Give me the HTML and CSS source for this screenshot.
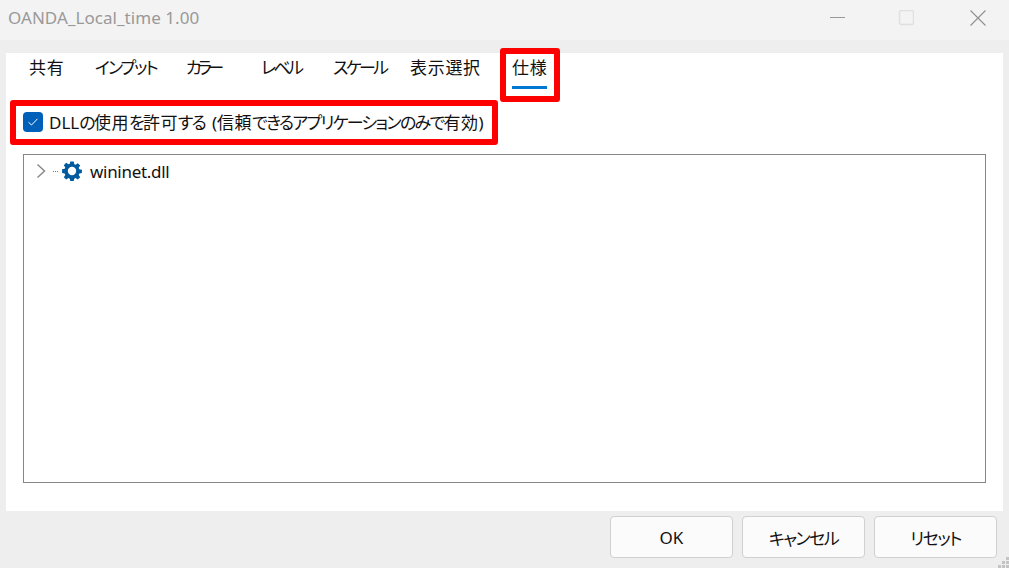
FILE: index.html
```html
<!DOCTYPE html>
<html lang="ja">
<head>
<meta charset="utf-8">
<title>OANDA_Local_time 1.00</title>
<link rel="stylesheet" href="styles.css">
</head>
<body>
<div class="window">
  <header class="titlebar">
    <span class="title">OANDA_Local_time 1.00</span>
    <div class="controls">
      <svg class="ctl" width="16" height="16" viewBox="0 0 16 16"><path d="M0 7.5H15" stroke="#999" fill="none"/></svg>
      <svg class="ctl ctl-max" width="16" height="16" viewBox="0 0 16 16"><rect x="1.5" y="0.5" width="14" height="14" rx="2" stroke="#e0e0e0" stroke-width="1.5" fill="none"/></svg>
      <svg class="ctl" width="16" height="16" viewBox="0 0 16 16"><path d="M0.5 0.5L15.5 15.5M15.5 0.5L0.5 15.5" stroke="#8f8f8f" stroke-width="1.1" fill="none"/></svg>
    </div>
  </header>
  <main class="panel">
    <nav class="tabs">
      <span class="tab t1 kanji">共有</span>
      <span class="tab t2 kana">インプット</span>
      <span class="tab t3 kana-long">カラー</span>
      <span class="tab t4 kana-tight">レベル</span>
      <span class="tab t5 kana-tight">スケール</span>
      <span class="tab t6 kanji">表示選択</span>
      <span class="tab t7 kanji active">仕様</span>
    </nav>
    <label class="check">
      <span class="box"><svg width="12" height="10" viewBox="0 0 12 10"><path d="M1.5 5.2L4.5 8L10.5 1.8" stroke="#fff" stroke-width="1" fill="none"/></svg></span>
      <span class="label"><span class="latin">DLL</span>の<span class="kj">使用</span>を<span class="kj">許可</span>する <span class="latin paren">(</span><span class="kj">信頼</span>できるアプリケーションのみで<span class="kj">有効</span><span class="latin">)</span></span>
    </label>
    <section class="tree">
      <div class="node">
        <svg class="chev" width="10" height="16" viewBox="0 0 10 16"><path d="M1.5 1.5L8.5 8L1.5 14.5" stroke="#8a8a8a" stroke-width="1.5" fill="none"/></svg>
        <span class="dots"></span>
        <svg class="gear" width="20" height="20" viewBox="0 0 20 20"><path fill="#005a9e" fill-rule="evenodd" d="M8.3 0.5h3.4l.5 2.6 1.4.6 2.2-1.5 2.4 2.4-1.5 2.2.6 1.4 2.6.5v3.4l-2.6.5-.6 1.4 1.5 2.2-2.4 2.4-2.2-1.5-1.4.6-.5 2.6H8.3l-.5-2.6-1.4-.6-2.2 1.5-2.4-2.4 1.5-2.2-.6-1.4-2.6-.5V8.3l2.6-.5.6-1.4-1.5-2.2 2.4-2.4 2.2 1.5 1.4-.6zM10 5.8a4.2 4.2 0 1 0 0 8.4a4.2 4.2 0 1 0 0-8.4z"/></svg>
        <span class="name">wininet.dll</span>
      </div>
    </section>
  </main>
  <footer class="footer">
    <button class="btn">OK</button>
    <button class="btn kana-btn">キャンセル</button>
    <button class="btn kana-btn">リセット</button>
    <svg class="grip" width="11" height="11" viewBox="0 0 11 11"><g fill="#c4c4c4"><rect x="8" y="0" width="3" height="3"/><rect x="4" y="4" width="3" height="3"/><rect x="8" y="4" width="3" height="3"/><rect x="0" y="8" width="3" height="3"/><rect x="4" y="8" width="3" height="3"/><rect x="8" y="8" width="3" height="3"/></g></svg>
  </footer>
  <div class="mark mark-tab"></div>
  <div class="mark mark-check"></div>
</div>
</body>
</html>
```

FILE: styles.css
```css
* { box-sizing: border-box; }
html, body { margin: 0; padding: 0; }
body {
  width: 1009px;
  height: 568px;
  overflow: hidden;
  font-family: "Noto Sans", "Noto Sans CJK JP", sans-serif;
  font-size: 17px;
  font-feature-settings: "palt";
  color: #111111;
  background: #eeeeee;
}
.window {
  position: relative;
  width: 1009px;
  height: 568px;
  display: flex;
  flex-direction: column;
}
.titlebar {
  height: 40px;
  margin-bottom: 13px;
  background: #f3f3f3;
  display: flex;
  align-items: center;
  justify-content: space-between;
  padding: 0 23px 6px 8px;
}
.title { color: #999999; font-size: 17px; letter-spacing: 0.05px; }
.controls { display: flex; gap: 52px; padding-top: 1px; }
.ctl { display: block; }
.ctl-max { margin-right: 4px; }
.panel {
  height: 458px;
  margin: 0 6px;
  background: #ffffff;
  display: flex;
  flex-direction: column;
  padding: 0 17px;
}
.tabs {
  height: 36px;
  display: flex;
  margin-left: 6px;
  line-height: 30px;
}
.tab { position: relative; white-space: nowrap; }
.kanji { letter-spacing: 0.7px; }
.kana { letter-spacing: -2px; }
.kana-tight { letter-spacing: -2.6px; }
.kana-long { letter-spacing: -4.5px; }
.t1 { width: 66px; }
.t2 { width: 91px; }
.t3 { width: 75px; }
.t4 { width: 72px; }
.t5 { width: 77px; }
.t6 { width: 102px; }
.active::after {
  content: "";
  position: absolute;
  left: 0;
  right: 0;
  top: 33px;
  height: 3px;
  background: #0078d4;
}
.check {
  height: 65px;
  display: flex;
  align-items: center;
  gap: 6px;
}
.label { letter-spacing: -1.7px; white-space: pre; }
.latin { letter-spacing: 0; }
.paren { margin-left: 4px; }
.kj { letter-spacing: 0.5px; }
.box {
  width: 20px;
  height: 20px;
  border-radius: 4px;
  background: #005fb8;
  display: flex;
  align-items: center;
  justify-content: center;
}
.tree {
  width: 963px;
  height: 329px;
  border: 1px solid #868686;
  background: #fff;
  padding: 6px 0 0 12px;
}
.node { display: flex; align-items: center; height: 20px; }
.chev { margin-right: 7px; }
.dots {
  width: 6px;
  height: 1px;
  margin-right: 3px;
  background-image: linear-gradient(90deg, #777 1px, transparent 1px);
  background-size: 2px 1px;
}
.gear { margin-right: 8px; }
.name { letter-spacing: -0.3px; }
.footer {
  position: relative;
  flex: 1;
  display: flex;
  justify-content: flex-end;
  gap: 9px;
  padding: 5px 12px 10px 0;
}
.btn {
  width: 123px;
  height: 42px;
  border: 1px solid #d0d0d0;
  border-radius: 4px;
  background: #fbfbfb;
  font: inherit;
  font-feature-settings: "palt";
  color: #111111;
  padding: 0;
}
.kana-btn { letter-spacing: -1.5px; }
.grip { position: absolute; right: 0; bottom: 0; }
.mark {
  position: absolute;
  border: 6px solid #ff0000;
  border-radius: 3px;
  pointer-events: none;
}
.mark-tab { left: 500px; top: 48px; width: 60px; height: 54px; }
.mark-check { left: 10px; top: 100px; width: 488px; height: 45px; }
```
